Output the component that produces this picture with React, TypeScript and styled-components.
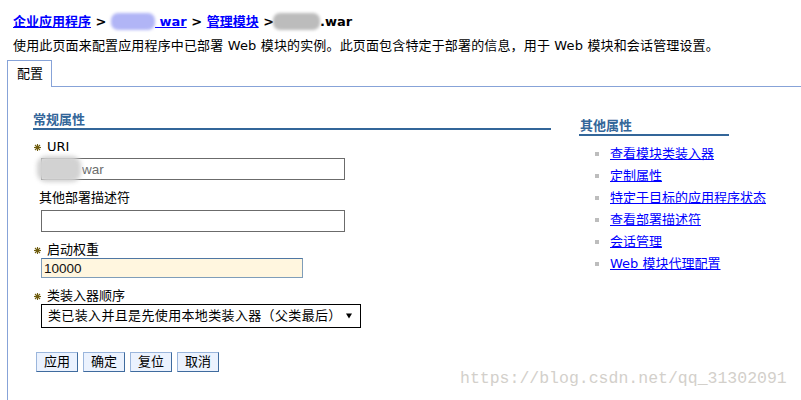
import React from "react";
import styled, { createGlobalStyle } from "styled-components";

const FONT = `"DejaVu Sans", "Noto Sans CJK SC", sans-serif`;
const LINE = "#87a3d8";

const GlobalStyle = createGlobalStyle`
  html, body { margin: 0; padding: 0; background: #fff; }
  body { font-family: ${FONT}; font-size: 13px; color: #000; }
  * { box-sizing: border-box; }
`;

const Page = styled.div`
  position: relative;
  width: 801px;
  height: 400px;
  overflow: hidden;
  font-family: ${FONT};
  font-size: 13px;
`;

const Breadcrumb = styled.div`
  padding: 13px 0 0 13px;
  font-weight: bold;
  line-height: 18px;
  height: 31px;
  white-space: nowrap;
`;

const Crumb = styled.a`
  color: #0000ff;
  text-decoration: underline;
  cursor: pointer;
`;

const Sep = styled.span`
  white-space: pre;
`;

const Blob = styled.span<{ $w: number; $c: string; $ml?: number }>`
  display: inline-block;
  width: ${(p) => p.$w}px;
  height: 17px;
  margin-left: ${(p) => p.$ml ?? 0}px;
  vertical-align: -4px;
  background: ${(p) => p.$c};
  border-radius: 7px;
  filter: blur(1.6px);
`;

const Description = styled.div`
  padding: 6px 0 0 13px;
  line-height: 18px;
  height: 24px;
  white-space: nowrap;
  letter-spacing: 0.15px;
`;

const TabStrip = styled.div`
  display: flex;
  margin-top: 5px;
  padding-left: 7px;
  height: 27px;
`;

const Tab = styled.div`
  width: 45px;
  height: 27px;
  border: 1px solid ${LINE};
  border-bottom: none;
  padding: 5px 0 0 9px;
  line-height: 16px;
  background: #fff;
`;

const TabFill = styled.div`
  flex: 1;
  border-bottom: 1px solid ${LINE};
`;

const Panel = styled.div`
  margin-left: 7px;
  height: 313px;
  border-left: 1px solid ${LINE};
  padding: 25px 0 0 25px;
  display: flex;
  gap: 28px;
`;

const LeftCol = styled.div`
  width: 518px;
  display: flex;
  flex-direction: column;
`;

const RightCol = styled.div`
  width: 150px;
  padding-top: 6px;
  display: flex;
  flex-direction: column;
`;

const SectionHeading = styled.div<{ $indent?: number }>`
  font-weight: bold;
  color: #336699;
  line-height: 16px;
  height: 18px;
  border-bottom: 2px solid #336699;
  padding-left: ${(p) => p.$indent ?? 0}px;
`;

const FieldLabel = styled.div<{ $gap: number; $plain?: boolean }>`
  display: flex;
  align-items: center;
  margin-top: ${(p) => p.$gap}px;
  height: 16px;
  line-height: 16px;
  padding-left: ${(p) => (p.$plain ? 6 : 1)}px;
  gap: 6px;
`;

const Star = styled.svg`
  width: 7px;
  height: 7px;
  flex: none;
`;

const FieldWrap = styled.div<{ $gap: number }>`
  position: relative;
  margin: ${(p) => p.$gap}px 0 0 8px;
  width: fit-content;
`;

const TextField = styled.input<{ $w: number; $h: number; $pad?: number; $tone?: "plain" | "warm" }>`
  display: block;
  width: ${(p) => p.$w}px;
  height: ${(p) => p.$h}px;
  border: 1px solid ${(p) => (p.$tone === "warm" ? "#7f9db9" : "#6b6b6b")};
  border-top-color: ${(p) => (p.$tone === "warm" ? "#4f77a3" : "#6b6b6b")};
  background: ${(p) => (p.$tone === "warm" ? "#fff6df" : "#fff")};
  padding: 0 0 0 ${(p) => p.$pad ?? 2}px;
  margin: 0;
  font-family: "Liberation Sans", "Noto Sans CJK SC", sans-serif;
  font-size: 13.5px;
  color: ${(p) => (p.$tone === "warm" ? "#111" : "#6d6d6d")};
  outline: none;
  border-radius: 0;
`;

const Smudge = styled.span`
  position: absolute;
  left: -4px;
  top: -2px;
  width: 44px;
  height: 26px;
  background: #d2d2d2;
  border-radius: 9px;
  filter: blur(2px);
`;

const SelectBox = styled.div`
  margin: 0 0 0 8px;
  width: 320px;
  height: 24px;
  border: 1px solid #000;
  display: flex;
  align-items: center;
  justify-content: space-between;
  padding: 0 8px 0 6px;
  background: #fff;
  line-height: 16px;
  letter-spacing: 0.35px;
`;

const Arrow = styled.svg`
  width: 6px;
  height: 6px;
  flex: none;
`;

const ButtonRow = styled.div`
  display: flex;
  gap: 5px;
  margin: 24px 0 0 3px;
`;

const Button = styled.button`
  height: 20px;
  padding: 0 7px;
  margin: 0;
  font-family: ${FONT};
  font-size: 13px;
  line-height: 16px;
  color: #000;
  background: #ebf2fe;
  border: 1px solid;
  border-color: #9bb6dc #3f6b9e #3f6b9e #9bb6dc;
  border-radius: 0;
  cursor: pointer;
`;

const LinkList = styled.ul`
  list-style: none;
  margin: 7px 0 0 0;
  padding: 0;
`;

const LinkItem = styled.li`
  display: flex;
  align-items: center;
  height: 22px;
  padding-left: 16px;
  gap: 11px;
  white-space: nowrap;
`;

const Bullet = styled.span`
  width: 4px;
  height: 4px;
  background: #bdbdbd;
  flex: none;
`;

const SideLink = styled.a`
  color: #0000ff;
  text-decoration: underline;
  line-height: 16px;
  cursor: pointer;
`;

const Watermark = styled.div`
  position: absolute;
  left: 460px;
  top: 370px;
  font-family: "Liberation Mono", monospace;
  font-size: 16.5px;
  line-height: 18px;
  color: #d3d0cb;
  white-space: nowrap;
`;

const RequiredStar = () => (
  <Star viewBox="0 0 7 7">
    <g stroke="#6f5d10" strokeWidth="1.1">
      <line x1="3.5" y1="0" x2="3.5" y2="7" />
      <line x1="0" y1="3.5" x2="7" y2="3.5" />
      <line x1="1" y1="1" x2="6" y2="6" />
      <line x1="6" y1="1" x2="1" y2="6" />
    </g>
  </Star>
);

const links = [
  "查看模块类装入器",
  "定制属性",
  "特定于目标的应用程序状态",
  "查看部署描述符",
  "会话管理",
  "Web 模块代理配置",
];

export default function App() {
  return (
    <Page>
      <GlobalStyle />
      <Breadcrumb>
        <Crumb>企业应用程序</Crumb>
        <Sep> &gt; </Sep>
        <Blob $w={44} $c="#b1b5f6" />
        <Crumb> war</Crumb>
        <Sep> &gt; </Sep>
        <Crumb>管理模块</Crumb>
        <Sep> &gt;</Sep>
        <Blob $w={47} $c="#bcbcbc" $ml={-1} />
        <span>.war</span>
      </Breadcrumb>
      <Description>
        使用此页面来配置应用程序中已部署 Web 模块的实例。此页面包含特定于部署的信息，用于 Web 模块和会话管理设置。
      </Description>
      <TabStrip>
        <Tab>配置</Tab>
        <TabFill />
      </TabStrip>
      <Panel>
        <LeftCol>
          <SectionHeading>常规属性</SectionHeading>

          <FieldLabel $gap={9}>
            <RequiredStar />
            <span>URI</span>
          </FieldLabel>
          <FieldWrap $gap={3}>
            <TextField $w={304} $h={22} $pad={40} readOnly value="war" />
            <Smudge />
          </FieldWrap>

          <FieldLabel $gap={10} $plain>
            <span>其他部署描述符</span>
          </FieldLabel>
          <FieldWrap $gap={4}>
            <TextField $w={304} $h={22} readOnly value="" />
          </FieldWrap>

          <FieldLabel $gap={10}>
            <RequiredStar />
            <span>启动权重</span>
          </FieldLabel>
          <FieldWrap $gap={0}>
            <TextField $w={262} $h={20} $tone="warm" readOnly value="10000" />
          </FieldWrap>

          <FieldLabel $gap={10}>
            <RequiredStar />
            <span>类装入器顺序</span>
          </FieldLabel>
          <SelectBox>
            <span>类已装入并且是先使用本地类装入器（父类最后）</span>
            <Arrow viewBox="0 0 6 6">
              <polygon points="0,0.5 6,0.5 3,5.5" fill="#000" />
            </Arrow>
          </SelectBox>

          <ButtonRow>
            <Button>应用</Button>
            <Button>确定</Button>
            <Button>复位</Button>
            <Button>取消</Button>
          </ButtonRow>
        </LeftCol>
        <RightCol>
          <SectionHeading $indent={1}>其他属性</SectionHeading>
          <LinkList>
            {links.map((l) => (
              <LinkItem key={l}>
                <Bullet />
                <SideLink>{l}</SideLink>
              </LinkItem>
            ))}
          </LinkList>
        </RightCol>
      </Panel>
      <Watermark>https://blog.csdn.net/qq_31302091</Watermark>
    </Page>
  );
}
